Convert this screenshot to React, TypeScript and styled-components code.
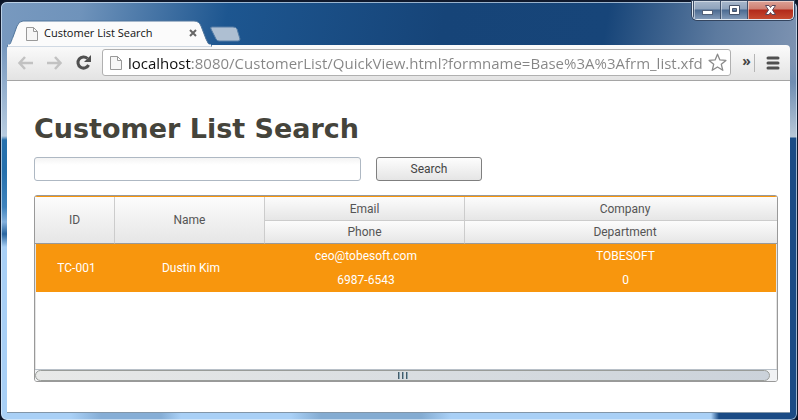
import React from "react";
import styled, { createGlobalStyle } from "styled-components";

const GlobalStyle = createGlobalStyle`
  *, *::before, *::after { box-sizing: border-box; }
  body { margin: 0; background: #0a1426; }
`;

const ui = `"Open Sans", "Noto Sans", sans-serif`;
const gridFont = `Roboto, "Liberation Sans", sans-serif`;

const Window = styled.div`
  min-height: 100vh;
  display: flex;
  flex-direction: column;
  padding: 0 7px 7px 6px;
  border: 1px solid #10192c;
  border-top-width: 2px;
  border-radius: 7px;
  box-shadow: inset 0 0 0 1px rgba(225, 238, 250, 0.65);
  background:
    linear-gradient(90deg, #a9d0f6 0 70px, #86aed6 100px 160px, #a9d0f6 180px 290px, #84acd2 320px 420px, #a9d0f6 450px 710px, #1a4b85 718px) bottom / 100% 7px no-repeat,
    linear-gradient(180deg, transparent 0 60px, #6f8db2 80px, #b9c8d8 135px, #1a4b85 136px 100%) right / 8px 100% no-repeat,
    linear-gradient(180deg, transparent 0 45px, #b8cce0 134px, #2670ac 138px 170px, #3f83bd 205px, #83b0dc 220px, #28649e 232px, #a9d0f6 245px 100%) left / 8px 100% no-repeat,
    linear-gradient(100deg, #7899bf 0, #6f93bb 80px, #1d5690 225px, #164478 440px, #174579 600px, #5c7a9f 710px, #8095b3 800px);
`;

const TitleBar = styled.header`
  height: 43px;
  display: flex;
  align-items: flex-end;
  position: relative;
`;

const Tab = styled.div`
  position: relative;
  width: 204px;
  height: 24px;
  padding: 0 14px 0 19px;
  display: flex;
  align-items: center;
  font: 11px/16px ${ui};
  color: #111;
`;

const TabShape = styled.svg`
  position: absolute;
  left: 0;
  top: 0;
  overflow: visible;
`;

const TabTitle = styled.span`
  position: relative;
  flex: 1;
  padding-left: 6px;
  white-space: nowrap;
`;

const PageGlyph = styled.svg`
  position: relative;
  flex: none;
`;

const IconButton = styled.button`
  position: relative;
  flex: none;
  display: flex;
  align-items: center;
  justify-content: center;
  padding: 0;
  border: 0;
  background: none;
`;

const NewTab = styled(IconButton)`
  margin: 0 0 3px -1px;
`;

const Controls = styled.div`
  position: absolute;
  right: -4px;
  top: -1px;
  display: flex;
  border: 1px solid #e3ebf3;
  border-top: 0;
  border-radius: 0 0 5px 5px;
  overflow: hidden;
  box-shadow: 0 0 0 1px #33445e;
`;

const ControlButton = styled.button<{ $close?: boolean }>`
  width: ${(p) => (p.$close ? 46 : 27)}px;
  height: 18px;
  padding: 0;
  display: flex;
  align-items: center;
  justify-content: center;
  border: 0;
  border-left: 1px solid #40516b;
  box-shadow: inset 1px 1px 0 rgba(255, 255, 255, 0.45);
  background: ${(p) =>
    p.$close
      ? "linear-gradient(#dda296 0, #cf8072 8px, #b22a1a 9px, #c64a30 100%)"
      : "linear-gradient(#a8b8cc 0, #8fa3bc 8px, #4b6a91 9px, #8199b7 100%)"};
`;

const Toolbar = styled.nav`
  height: 36px;
  padding: 0 10px;
  display: flex;
  align-items: center;
  border-bottom: 1px solid #a5a5a5;
  border-radius: 4px 4px 0 0;
  background: linear-gradient(#fbfbfb, #e3e3e3);
`;

const NavButtons = styled.div`
  display: flex;
  gap: 12px;
  margin-right: 10px;
`;

const AddressBox = styled.label`
  flex: 1;
  min-width: 0;
  height: 27px;
  display: flex;
  align-items: center;
  padding: 0 3px 0 7px;
  border: 1px solid #b0b0b0;
  border-radius: 3px;
  background: #fff;
`;

const Address = styled.input`
  flex: 1;
  min-width: 0;
  height: 25px;
  margin-left: 6px;
  padding: 0;
  border: 0;
  outline: 0;
  font: 15px/24px ${ui};
  color: #858585;
  background: linear-gradient(90deg, #111 64px, #858585 64px);
  -webkit-background-clip: text;
  background-clip: text;
  -webkit-text-fill-color: transparent;
`;

const Overflow = styled.button`
  width: 24px;
  height: 18px;
  margin-right: 11px;
  padding: 0 0 4px 8px;
  border: 0;
  border-right: 1px solid #b5b5b5;
  background: none;
  font: 700 14px/14px ${ui};
  color: #444;
`;

const Content = styled.main`
  flex: 1;
  padding: 30px 12px 30px 27px;
  background: #fff;
  border-bottom: 1px solid #8296a8;
`;

const Title = styled.h1`
  margin: 0;
  font: 700 27px/36px Verdana, "DejaVu Sans", sans-serif;
  color: #45443b;
`;

const SearchForm = styled.form`
  display: flex;
  gap: 15px;
  margin: 10px 0 14px;
`;

const SearchInput = styled.input`
  width: 327px;
  height: 24px;
  padding: 0 6px;
  border: 1px solid #aeb8c3;
  border-radius: 3px;
  background: linear-gradient(#f4f4f4, #fff 7px);
  font: 12px/16px ${gridFont};
`;

const SearchButton = styled.button`
  width: 106px;
  height: 24px;
  padding: 0;
  border: 1px solid #7f7f7f;
  border-radius: 3px;
  background: linear-gradient(#fdfdfd, #e5e5e5);
  font: 12px/16px ${gridFont};
  color: #444;
`;

const GridPanel = styled.section`
  border: 1px solid #999;
  border-radius: 3px;
  overflow: hidden;
`;

const Table = styled.table`
  width: 100%;
  table-layout: fixed;
  border-collapse: separate;
  border-spacing: 0;
  border-top: 1px solid #f8960d;
  font: 12px/16px ${gridFont};
  text-align: center;
`;

const Col = styled.col<{ $width?: number }>`
  width: ${(p) => (p.$width ? `${p.$width}px` : "auto")};
`;

const HeadCell = styled.th<{ $upper?: boolean; $last?: boolean }>`
  height: ${(p) => (p.$upper ? 24 : 23)}px;
  padding: 0 0 0 ${(p) => (p.$last ? 8 : 0)}px;
  border-bottom: 1px solid ${(p) => (p.$upper ? "#ccc" : "#999")};
  border-right: ${(p) => (p.$last ? "0" : "1px solid #ccc")};
  background: linear-gradient(#fcfcfc, #e6e6e6);
  font-weight: 400;
  color: #555;
`;

const Cell = styled.td<{ $first?: boolean; $last?: boolean }>`
  height: 24px;
  padding: 0 0 0 ${(p) => (p.$last ? 10 : 2)}px;
  border: 0 solid #e4e4e4;
  border-left-width: ${(p) => (p.$first ? 1 : 0)}px;
  border-right-width: ${(p) => (p.$last ? 1 : 0)}px;
  background: #f8960d;
  color: #fff;
`;

const EmptyRows = styled.div`
  height: 77px;
  border: 1px solid #e4e4e4;
  border-width: 0 1px;
`;

const ScrollTrack = styled.div`
  height: 12px;
  padding-right: 7px;
  border-top: 1px solid #b8c0c8;
  background: #f1f2f4;
`;

const ScrollThumb = styled.div`
  height: 11px;
  display: flex;
  align-items: center;
  justify-content: center;
  gap: 2px;
  border: 1px solid #999c99;
  border-radius: 6px;
  background: linear-gradient(90deg, #e8e9e8, #cbd2da);
`;

const Grip = styled.span`
  width: 2px;
  height: 7px;
  border-left: 1px solid #465b68;
  background: #8aa9b8;
`;

const PageIcon = () => (
  <PageGlyph width="12" height="15" viewBox="0 0 12 15" fill="#f6f6f6" stroke="#999" aria-hidden="true">
    <path d="M.5 1.5h7l4 4v9H.5zM7.5 1.5v4h4" />
  </PageGlyph>
);

type Customer = { id: string; name: string; email: string; phone: string; company: string; department: string };

const customers: Customer[] = [
  { id: "TC-001", name: "Dustin Kim", email: "ceo@tobesoft.com", phone: "6987-6543", company: "TOBESOFT", department: "0" },
];

export default function App() {
  return (
    <>
      <GlobalStyle />
      <Window>
        <TitleBar>
          <Tab>
            <TabShape width="204" height="24" aria-hidden="true">
              <path d="M0 25C4 24 4 20 6 16L10 5Q12 0 16 0H187Q192 0 194 5L199 18Q201 24 205 25z" fill="#fbfbfb" stroke="#50759b" strokeWidth="1" />
              <path d="M1 24.5H204" stroke="#fbfbfb" strokeWidth="2" />
            </TabShape>
            <PageIcon />
            <TabTitle>Customer List Search</TabTitle>
            <IconButton type="button" aria-label="Close tab">
              <svg width="8" height="8" viewBox="0 0 8 8" stroke="#666" strokeWidth="2"><path d="M1 1l6 6M7 1l-6 6" /></svg>
            </IconButton>
          </Tab>
          <NewTab type="button" aria-label="New tab">
            <svg width="31" height="16" viewBox="0 0 31 16"><path d="M2 1H23Q26 1 27 3L30 13Q30 15 28 15H9Q7 15 6 13L1 3Q0 1 2 1z" fill="#aebfd2" stroke="#567da5" /></svg>
          </NewTab>
          <Controls>
            <ControlButton type="button" aria-label="Minimize">
              <svg width="13" height="12"><rect x="1.500" y="6.500" width="10" height="4" fill="#fff" stroke="#526078" /></svg>
            </ControlButton>
            <ControlButton type="button" aria-label="Maximize">
              <svg width="13" height="12"><path d="M1.500 1.500h10v9h-10zM4.500 4.500v3h4v-3z" fillRule="evenodd" fill="#fff" stroke="#47546b" /></svg>
            </ControlButton>
            <ControlButton type="button" aria-label="Close" $close>
              <svg width="13" height="12" viewBox="0 0 13 12"><path d="M1.500 1.500H5L6.500 3.500 8 1.500h3.500L8.500 6l3 4.500H8L6.500 8.500 5 10.500H1.500L4.500 6z" fill="#fff" stroke="#59485a" /></svg>
            </ControlButton>
          </Controls>
        </TitleBar>
        <Toolbar aria-label="Browser">
          <NavButtons>
            <IconButton type="button" aria-label="Back">
              <svg width="17" height="16" viewBox="0 0 17 16" fill="none" stroke="#c2c2c2" strokeWidth="2.500"><path d="M8 2L2.500 8 8 14M3 8h13" /></svg>
            </IconButton>
            <IconButton type="button" aria-label="Forward">
              <svg width="17" height="16" viewBox="0 0 17 16" fill="none" stroke="#c2c2c2" strokeWidth="2.500"><path d="M9 2l5.500 6L9 14M14 8H1" /></svg>
            </IconButton>
            <IconButton type="button" aria-label="Reload">
              <svg width="17" height="17" viewBox="0 0 17 17"><path d="M12.500 4.500A5.600 5.600 0 1 0 13.600 11" fill="none" stroke="#505050" strokeWidth="3" /><path d="M16 1v7H9z" fill="#505050" /></svg>
            </IconButton>
          </NavButtons>
          <AddressBox>
            <PageIcon />
            <Address aria-label="Address" defaultValue="localhost:8080/CustomerList/QuickView.html?formname=Base%3A%3Afrm_list.xfd" />
            <svg width="19" height="19" viewBox="0 0 19 19" fill="#fff" stroke="#8a8a8a" strokeWidth="1.300" aria-hidden="true">
              <path d="M9.500 1.200l2.400 5.700 6 .5-4.600 3.900 1.500 6-5.300-3.300-5.300 3.300 1.500-6L1.100 7.400l6-.5z" strokeLinejoin="round" />
            </svg>
          </AddressBox>
          <Overflow type="button" aria-label="More extensions">»</Overflow>
          <IconButton type="button" aria-label="Menu">
            <svg width="14" height="14" viewBox="0 0 14 14" stroke="#505050" strokeWidth="3" strokeLinecap="round"><path d="M2 2h10M2 7h10M2 12h10" /></svg>
          </IconButton>
        </Toolbar>
        <Content>
          <Title>Customer List Search</Title>
          <SearchForm onSubmit={(e) => e.preventDefault()}>
            <SearchInput type="text" aria-label="Customer" />
            <SearchButton type="submit">Search</SearchButton>
          </SearchForm>
          <GridPanel>
            <Table>
              <colgroup>
                <Col $width={80} />
                <Col $width={150} />
                <Col $width={200} />
                <Col />
              </colgroup>
              <thead>
                <tr>
                  <HeadCell rowSpan={2}>ID</HeadCell>
                  <HeadCell rowSpan={2}>Name</HeadCell>
                  <HeadCell $upper>Email</HeadCell>
                  <HeadCell $upper $last>Company</HeadCell>
                </tr>
                <tr>
                  <HeadCell>Phone</HeadCell>
                  <HeadCell $last>Department</HeadCell>
                </tr>
              </thead>
              {customers.map((c) => (
                <tbody key={c.id}>
                  <tr>
                    <Cell rowSpan={2} $first>{c.id}</Cell>
                    <Cell rowSpan={2}>{c.name}</Cell>
                    <Cell>{c.email}</Cell>
                    <Cell $last>{c.company}</Cell>
                  </tr>
                  <tr>
                    <Cell>{c.phone}</Cell>
                    <Cell $last>{c.department}</Cell>
                  </tr>
                </tbody>
              ))}
            </Table>
            <EmptyRows />
            <ScrollTrack>
              <ScrollThumb><Grip /><Grip /><Grip /></ScrollThumb>
            </ScrollTrack>
          </GridPanel>
        </Content>
      </Window>
    </>
  );
}
